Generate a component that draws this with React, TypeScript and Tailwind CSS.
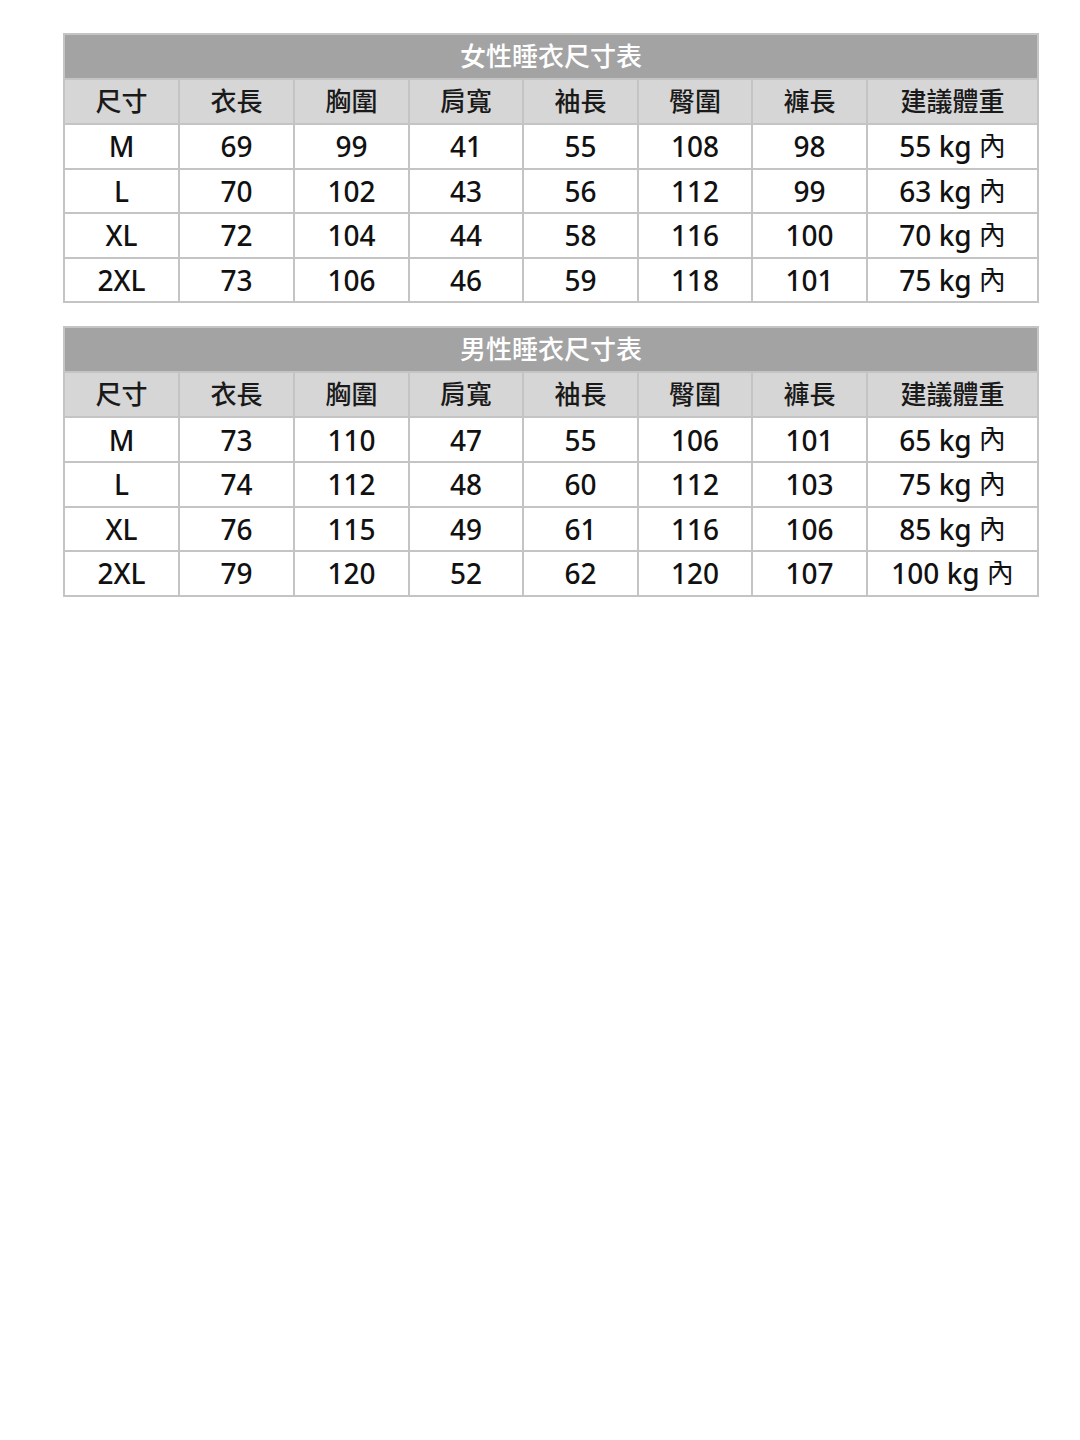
const headers = ["尺寸", "衣長", "胸圍", "肩寬", "袖長", "臀圍", "褲長", "建議體重"];

const women = [
  ["M", "69", "99", "41", "55", "108", "98", "55 kg"],
  ["L", "70", "102", "43", "56", "112", "99", "63 kg"],
  ["XL", "72", "104", "44", "58", "116", "100", "70 kg"],
  ["2XL", "73", "106", "46", "59", "118", "101", "75 kg"],
];

const men = [
  ["M", "73", "110", "47", "55", "106", "101", "65 kg"],
  ["L", "74", "112", "48", "60", "112", "103", "75 kg"],
  ["XL", "76", "115", "49", "61", "116", "106", "85 kg"],
  ["2XL", "79", "120", "52", "62", "120", "107", "100 kg"],
];

const cols = "grid grid-cols-[113px_115px_115px_114px_115px_114px_115px_1fr]";

function SizeTable({ title, rows }: { title: string; rows: string[][] }) {
  return (
    <div className="w-[976px] border-2 border-[#c4c4c4] bg-white">
      <div className="flex h-[43px] items-center justify-center bg-[#a3a3a3] text-[26px] font-medium text-white">
        {title}
      </div>
      <div className={`${cols} h-[45px] bg-[#d6d6d6] border-t-2 border-[#c4c4c4]`}>
        {headers.map((h, i) => (
          <div
            key={h}
            className={`flex items-center justify-center text-[26px] font-medium text-[#1a1a1a] ${i > 0 ? "border-l-2 border-[#c4c4c4]" : ""}`}
          >
            {h}
          </div>
        ))}
      </div>
      {rows.map((r) => (
        <div key={r[0]} className={`${cols} h-[44.6px] border-t-2 border-[#c4c4c4]`}>
          {r.map((c, i) => (
            <div
              key={i}
              className={`flex items-center justify-center text-[28px] font-medium text-[#111] ${i > 0 ? "border-l-2 border-[#c4c4c4]" : ""}`}
            >
              {c}
              {i === 7 && <span className="ml-[7px] text-[27px] font-normal">內</span>}
            </div>
          ))}
        </div>
      ))}
    </div>
  );
}

export default function App() {
  return (
    <div
      className="min-h-[1440px] w-[1080px] bg-white pl-[63px] pt-[33px]"
      style={{ fontFamily: '"Noto Sans", "Noto Sans CJK TC", sans-serif' }}
    >
      <div className="flex flex-col gap-[23px]">
        <SizeTable title="女性睡衣尺寸表" rows={women} />
        <SizeTable title="男性睡衣尺寸表" rows={men} />
      </div>
    </div>
  );
}
